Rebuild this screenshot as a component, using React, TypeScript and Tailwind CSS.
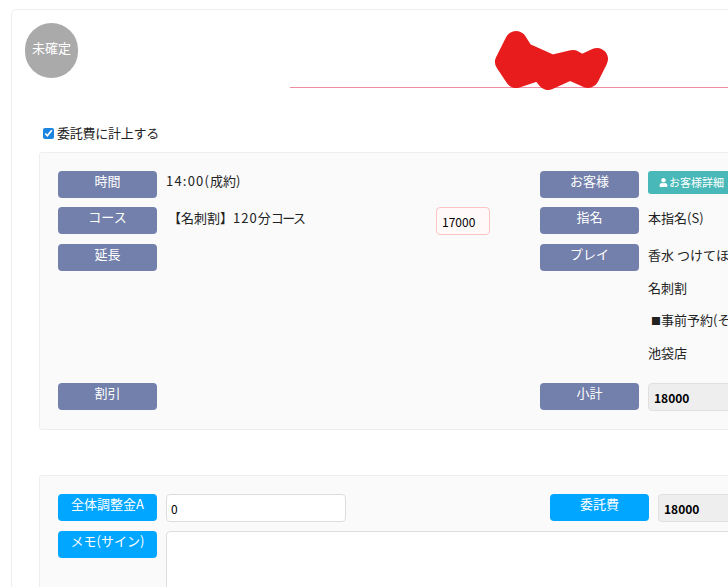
import { FaUser } from "react-icons/fa";

function Label({ children, blue }: { children: React.ReactNode; blue?: boolean }) {
  return (
    <div
      className={
        "h-[27px] w-[99px] rounded-[4px] text-center text-[13px] leading-[20px] text-white " +
        (blue ? "bg-[#00a6ff]" : "bg-[#7380ab]")
      }
    >
      {children}
    </div>
  );
}

function Value({ children }: { children?: React.ReactNode }) {
  return <div className="whitespace-nowrap text-[13px] leading-[22px] text-[#222]">{children}</div>;
}

export default function App() {
  return (
    <div
      className="relative h-[587px] w-[728px] overflow-hidden bg-white pl-[11px] pt-[9px]"
      style={{ fontFamily: '"Noto Sans CJK JP", "Noto Sans", sans-serif' }}
    >
      <div className="w-[1000px] rounded-[5px] border border-[#eeeeee] pb-10 pl-[13px] pt-[13px]">
        <div className="flex">
          <div className="flex h-[55px] w-[53px] shrink-0 items-center justify-center rounded-full bg-[#aaaaaa] pb-[5px] text-[13px] text-white">
            未確定
          </div>
          <div className="ml-[212px] h-[65px] flex-1 border-b border-[#ee8ca2]" />
        </div>

        <label className="ml-[18px] mt-[35px] flex h-[20px] items-center text-[13px] tracking-[-0.25px] text-[#222]">
          <input type="checkbox" defaultChecked className="mr-[3px] h-[11px] w-[11px] accent-[#1a85e0]" />
          委託費に計上する
        </label>

        <div className="ml-[14px] mt-[9px] rounded-[3px] border border-[#eeeeee] bg-[#fafafa] pb-[18px] pl-[18px] pt-[18px]">
          <div className="grid grid-cols-[99px_261px_95px_99px_1fr] grid-rows-[36px_37px_33px_32px_33px_41px_28px] gap-x-[9px]">
            <Label>時間</Label>
            <div className="-mt-px">
              <Value>
                <span className="tracking-[1.2px]">14:00(</span>成約)
              </Value>
            </div>
            <div />
            <Label>お客様</Label>
            <div>
              <button className="flex h-[23px] w-[90px] items-center gap-[1px] rounded-[3px] bg-[#48b8b8] pl-[11px] text-[11px] text-white">
                <FaUser className="h-[9px] w-[9px]" />
                お客様詳細
              </button>
            </div>

            <Label>コース</Label>
            <div className="pl-[2px]">
              <Value>
                【名刺割】<span className="tracking-[1px]">120</span>分<span className="tracking-[-1.5px]">コース</span>
              </Value>
            </div>
            <div className="h-[28px] w-[54px] rounded-[4px] border border-[#ffc4c4] bg-[#fff9f9] pl-[5px] text-[12px] leading-[28px] text-black">
              17000
            </div>
            <Label>指名</Label>
            <Value>本指名(S)</Value>

            <Label>延長</Label>
            <div />
            <div />
            <Label>プレイ</Label>
            <Value>香水 つけてほしい</Value>

            <div className="col-start-5"><Value>名刺割</Value></div>
            <div className="col-start-5">
              <Value>
                <span className="pl-[3px] text-[10px]">■</span>事前予約(その他)
              </Value>
            </div>
            <div className="col-start-5"><Value>池袋店</Value></div>

            <Label>割引</Label>
            <div />
            <div />
            <Label>小計</Label>
            <div className="h-[28px] w-[200px] rounded-[4px] border border-[#e0e0e0] bg-[#eeeeee] pl-[5px] text-[12px] font-bold leading-[28px] text-black">
              18000
            </div>
          </div>
        </div>

        <div className="ml-[14px] mt-[45px] rounded-[3px] border border-[#eeeeee] bg-[#fafafa] pb-[19px] pl-[18px] pt-[18px]">
          <div className="flex">
            <Label blue>全体調整金A</Label>
            <div className="ml-[9px] h-[28px] w-[180px] rounded-[4px] border border-[#dddddd] bg-white pl-[4px] text-[12px] leading-[28px] text-black">
              0
            </div>
            <div className="ml-[204px]"><Label blue>委託費</Label></div>
            <div className="ml-[9px] h-[28px] w-[200px] rounded-[4px] border border-[#e0e0e0] bg-[#eeeeee] pl-[5px] text-[12px] font-bold leading-[28px] text-black">
              18000
            </div>
          </div>
          <div className="mt-[9px] flex">
            <Label blue>メモ(サイン)</Label>
            <div className="ml-[9px] h-[100px] w-[700px] rounded-[4px] border border-[#dddddd] bg-white" />
          </div>
        </div>
      </div>

      <svg className="absolute left-[480px] top-[20px]" width="150" height="80" viewBox="480 20 150 80">
        <path d="M505 72 L508 81 L512 74 Z" fill="#f5a020" />
        <path
          d="M516 42 L506 62 L516 77 L540 69 L548 79 L570 69 L588 77 L597 59 L582 66 L573 61 L552 66 L523 53 Z"
          fill="#e81c1c"
          stroke="#e81c1c"
          strokeWidth="22"
          strokeLinejoin="round"
        />
      </svg>
    </div>
  );
}
